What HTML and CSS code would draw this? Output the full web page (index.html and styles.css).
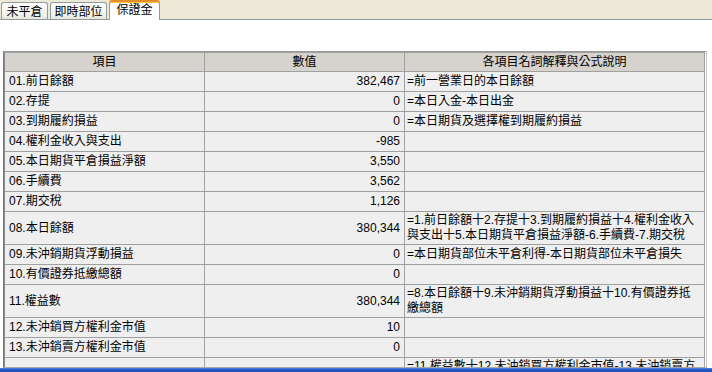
FILE: index.html
```html
<!DOCTYPE html>
<html lang="zh-Hant">
<head>
<meta charset="utf-8">
<title>保證金</title>
<link rel="stylesheet" href="styles.css">
</head>
<body>
<div class="tabbar">
  <div class="tab t1">未平倉</div>
  <div class="tab t2">即時部位</div>
  <div class="tab t3 active">保證金</div>
</div>
<div class="content">
  <div class="panel">
    <table class="grid">
      <colgroup><col class="c1"><col class="c2"><col class="c3"></colgroup>
      <thead>
        <tr><th>項目</th><th>數值</th><th>各項目名詞解釋與公式說明</th></tr>
      </thead>
      <tbody>
        <tr><td class="name">01.前日餘額</td><td class="num">382,467</td><td class="desc">=前一營業日的本日餘額</td></tr>
        <tr><td class="name">02.存提</td><td class="num">0</td><td class="desc">=本日入金-本日出金</td></tr>
        <tr><td class="name">03.到期履約損益</td><td class="num">0</td><td class="desc">=本日期貨及選擇權到期履約損益</td></tr>
        <tr><td class="name">04.權利金收入與支出</td><td class="num">-985</td><td class="desc"></td></tr>
        <tr><td class="name">05.本日期貨平倉損益淨額</td><td class="num">3,550</td><td class="desc"></td></tr>
        <tr><td class="name">06.手續費</td><td class="num">3,562</td><td class="desc"></td></tr>
        <tr><td class="name">07.期交稅</td><td class="num">1,126</td><td class="desc"></td></tr>
        <tr><td class="name">08.本日餘額</td><td class="num">380,344</td><td class="desc two">=1.前日餘額十2.存提十3.到期履約損益十4.權利金收入<br>與支出十5.本日期貨平倉損益淨額-6.手續費-7.期交稅</td></tr>
        <tr><td class="name">09.未沖銷期貨浮動損益</td><td class="num">0</td><td class="desc">=本日期貨部位未平倉利得-本日期貨部位未平倉損失</td></tr>
        <tr><td class="name">10.有價證券抵繳總額</td><td class="num">0</td><td class="desc"></td></tr>
        <tr><td class="name">11.權益數</td><td class="num">380,344</td><td class="desc two">=8.本日餘額十9.未沖銷期貨浮動損益十10.有價證券抵<br>繳總額</td></tr>
        <tr><td class="name">12.未沖銷買方權利金市值</td><td class="num">10</td><td class="desc"></td></tr>
        <tr><td class="name">13.未沖銷賣方權利金市值</td><td class="num">0</td><td class="desc"></td></tr>
        <tr><td class="name"></td><td class="num"></td><td class="desc two">=11.權益數十12.未沖銷買方權利金市值-13.未沖銷賣方</td></tr>
      </tbody>
    </table>
  </div>
</div>
<div class="taskbar"></div>
</body>
</html>
```

FILE: styles.css
```css
* { box-sizing: border-box; }

html, body {
  margin: 0;
  padding: 0;
}

body {
  width: 712px;
  height: 372px;
  overflow: hidden;
  background: #ffffff;
  font-family: "Liberation Sans", "Noto Sans CJK TC", sans-serif;
  font-size: 12px;
  color: #000;
}

.tabbar {
  height: 20px;
  background: #ECE9D8;
  border-bottom: 1px solid #919B9C;
  display: flex;
  align-items: flex-end;
  gap: 2px;
  padding-left: 1px;
}

.tab {
  height: 17px;
  border: 1px solid #919B9C;
  border-bottom: none;
  border-radius: 3px 3px 0 0;
  background: linear-gradient(#FEFEFE, #F1F0EA 80%, #E6E4DA);
  display: flex;
  align-items: center;
  justify-content: center;
  line-height: 14px;
  padding-top: 1px;
  white-space: nowrap;
}

.t1 { width: 47px; }
.t2 { width: 57px; }
.t3 { width: 51px; }

.tab.active {
  height: 20px;
  margin-bottom: -1px;
  background: #FFFFFF;
  border-top: 2px solid #E68B2C;
  box-shadow: inset 0 1px 0 #FFC73C;
  padding-top: 0;
  padding-bottom: 3px;
}

.content {
  height: 348px;
  padding-top: 31px;
  padding-left: 3px;
  background: #FFFFFF;
}

.panel {
  width: 704px;
  height: 317px;
  border-top: 1px solid #9A9A9A;
  border-left: 1px solid #7A7A7A;
  border-right: 1px solid #C8C8C8;
  border-bottom: 1px solid #A8A8A8;
  overflow: hidden;
  background: #FFFFFF;
}

.grid {
  table-layout: fixed;
  width: 701px;
  border-collapse: separate;
  border-spacing: 0;
  border-top: 1px solid #A0A0A0;
  border-left: 1px solid #8A8A8A;
}

.c1 { width: 200px; }
.c2 { width: 200px; }
.c3 { width: 300px; }

.grid th,
.grid td {
  border-right: 1px solid #A0A0A0;
  border-bottom: 1px solid #A0A0A0;
  padding: 0;
  white-space: nowrap;
  overflow: hidden;
  vertical-align: middle;
}

.grid th {
  background: #D6D3CE;
  font-weight: normal;
  text-align: center;
  line-height: 18px;
}

.grid td {
  background: #EFEFEF;
  line-height: 19px;
}

.grid td.name {
  padding-left: 4px;
}

.grid td.num {
  text-align: right;
  padding-right: 4px;
}

.grid td.desc {
  padding-left: 2px;
}

.grid td.desc.two {
  line-height: 15px;
  padding-top: 1px;
  padding-bottom: 1px;
}

.taskbar {
  height: 4px;
  background: linear-gradient(#5A8AE6, #2456C7 40%, #1E4DB8);
}
```
